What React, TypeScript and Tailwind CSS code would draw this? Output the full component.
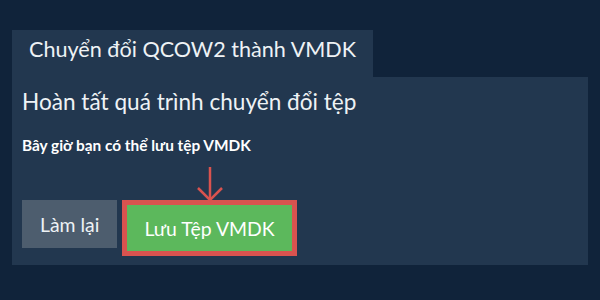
import React from 'react';

const Arrow = () => (
  <svg width="30" height="36" viewBox="0 0 30 36" fill="none" className="block">
    <path d="M15 1 L15 33" stroke="#d9534f" strokeWidth="2.5" />
    <path d="M3 22 L15 34 L27 22" stroke="#d9534f" strokeWidth="2.5" />
  </svg>
);

export default function App() {
  return (
    <div
      className="w-[600px] h-[300px] bg-[#10233a] pt-[30px] px-[12px]"
      style={{ fontFamily: 'Lato, "Noto Sans", sans-serif' }}
    >
      {/* tab */}
      <div className="inline-flex h-[47px] bg-[#22374f] px-[17px] pt-[7px] text-[21.6px] leading-[1.2] text-[#eef2f5]">
        Chuyển đổi QCOW2 thành VMDK
      </div>

      <div className="bg-[#22374f] px-[10px] pt-[11px] pb-[9px]">
        <h1 className="text-[22.6px] leading-[1.2] text-[#eef2f5]">
          Hoàn tất quá trình chuyển đổi tệp
        </h1>
        <p className="mt-[20px] text-[15.4px] leading-[20px] font-bold text-white">
          Bây giờ bạn có thể lưu tệp VMDK
        </p>

        <div className="mt-[45px] flex items-start gap-[5px]">
          <button className="h-[48px] px-[18px] bg-[#4d5d6e] text-[19.4px] text-[#eef2f5]">
            Làm lại
          </button>
          <div className="relative border-[5px] border-[#d9534f]">
            <div className="absolute bottom-full left-1/2 -translate-x-1/2 mb-[3px]">
              <Arrow />
            </div>
            <button className="h-[46px] px-[17px] bg-[#5cb85c] text-[19.4px] text-white">
              Lưu Tệp VMDK
            </button>
          </div>
        </div>
      </div>
    </div>
  );
}
